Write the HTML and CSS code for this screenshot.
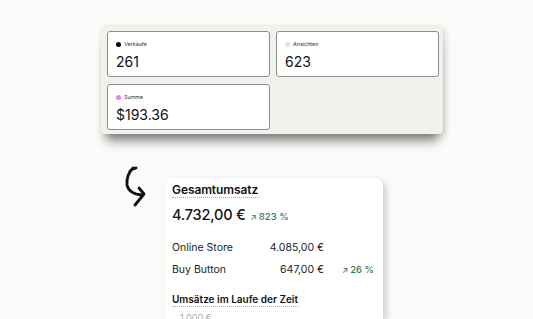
FILE: index.html
```html
<!DOCTYPE html>
<html lang="de">
<head>
<meta charset="utf-8">
<link rel="stylesheet" href="styles.css">
</head>
<body>
<div class="page">
  <section class="panel">
    <div class="stat">
      <div class="label"><span class="dot dot-black"></span>Verkäufe</div>
      <div class="value">261</div>
    </div>
    <div class="stat">
      <div class="label"><span class="dot dot-grey"></span>Ansichten</div>
      <div class="value">623</div>
    </div>
    <div class="stat">
      <div class="label"><span class="dot dot-pink"></span>Summe</div>
      <div class="value">$193.36</div>
    </div>
  </section>

  <section class="lower">
    <svg class="arrow" width="30" height="48" viewBox="0 0 30 48" aria-hidden="true">
      <path d="M6 6 Q9 3 12 3 M9 3 Q2 10 3 20 Q5 29 18 30" fill="none" stroke="#111" stroke-width="2.8" stroke-linecap="round" stroke-linejoin="round"/>
      <path d="M15 23 L20 29 L11 40" fill="none" stroke="#111" stroke-width="2.8" stroke-linecap="round" stroke-linejoin="round"/>
    </svg>
    <div class="report">
      <h2 class="title">Gesamtumsatz</h2>
      <div class="total">
        <span class="total-value">4.732,00 €</span>
        <span class="trend"><span class="trend-arrow">↗</span>823 %</span>
      </div>
      <div class="rows">
        <div class="row">
          <span class="row-name">Online Store</span>
          <span class="row-value">4.085,00 €</span>
          <span class="row-trend"></span>
        </div>
        <div class="row">
          <span class="row-name">Buy Button</span>
          <span class="row-value">647,00 €</span>
          <span class="row-trend trend"><span class="trend-arrow">↗</span>26 %</span>
        </div>
      </div>
      <h3 class="subtitle">Umsätze im Laufe der Zeit</h3>
      <div class="axis">1.000 €</div>
    </div>
  </section>
</div>
</body>
</html>
```

FILE: styles.css
```css
* { box-sizing: border-box; }
html, body { margin: 0; padding: 0; }
body {
  background: #fbfbfa;
  font-family: Inter, "Noto Sans", sans-serif;
  color: #111;
  width: 533px;
  height: 319px;
  overflow: hidden;
}
.page {
  display: flex;
  flex-direction: column;
  padding: 26px 0 0 101px;
}
.panel {
  width: 342px;
  height: 108px;
  background: #f2f2ec;
  border-radius: 4px;
  padding: 5px 4px 4px 6px;
  display: grid;
  grid-template-columns: 163px 163px;
  grid-template-rows: 46px 46px;
  column-gap: 6px;
  row-gap: 7px;
  box-shadow: 0 12px 10px -5px rgba(0,0,0,0.45), 3px 2px 6px rgba(0,0,0,0.12), 0 0 2px rgba(0,0,0,0.1);
}
.stat {
  background: #fff;
  border: 1.5px solid #8d8d8d;
  border-radius: 3px;
  padding: 8px 8px 0 8px;
  display: flex;
  flex-direction: column;
  gap: 5px;
}
.label {
  display: flex;
  align-items: center;
  gap: 3px;
  font-size: 5.4px;
  color: #333;
  height: 8px;
}
.dot {
  width: 5px;
  height: 5px;
  border-radius: 50%;
  display: inline-block;
}
.dot-black { background: #000; }
.dot-grey { background: #e2e2e2; }
.dot-pink { background: #f07ee6; }
.value {
  font-size: 14px;
  line-height: 17px;
  font-weight: 400;
  color: #111;
}
.lower {
  display: flex;
  align-items: flex-start;
  margin-top: 31px;
  margin-left: 23px;
}
.arrow {
  margin-right: 11px;
  flex: none;
}
.report {
  margin-top: 13px;
  width: 218px;
  height: 141px;
  overflow: hidden;
  background: #fff;
  border-radius: 8px 8px 0 0;
  padding: 0 7px 0 7px;
  box-shadow: 4px 3px 6px rgba(0,0,0,0.16), 0 0 2px rgba(0,0,0,0.08);
}
.title {
  margin: 0;
  font-size: 12px;
  font-weight: 600;
  display: inline-block;
  border-bottom: 1px dotted #aaa;
  line-height: 15px;
  letter-spacing: -0.1px;
}
.total {
  display: flex;
  align-items: baseline;
  gap: 5px;
  margin-top: 8px;
}
.total-value {
  font-size: 14.5px;
  font-weight: 500;
  letter-spacing: -0.2px;
}
.trend {
  color: #2f7d5d;
  font-size: 9.5px;
  font-weight: 500;
}
.trend-arrow {
  font-size: 8px;
  margin-right: 2px;
}
.rows {
  margin-top: 18px;
  display: flex;
  flex-direction: column;
  gap: 9px;
}
.row {
  display: grid;
  grid-template-columns: 70px 82px 50px;
  font-size: 10.5px;
  line-height: 13px;
  color: #222;
}
.row-value { text-align: right; }
.row-trend { text-align: right; font-size: 9.5px; }
.subtitle {
  margin: 16px 0 0 0;
  font-size: 10px;
  font-weight: 600;
  display: inline-block;
  border-bottom: 1px dotted #aaa;
  line-height: 13px;
}
.axis {
  margin-top: 5px;
  margin-left: 8px;
  font-size: 9px;
  line-height: 11px;
  color: #aaa;
}
```
